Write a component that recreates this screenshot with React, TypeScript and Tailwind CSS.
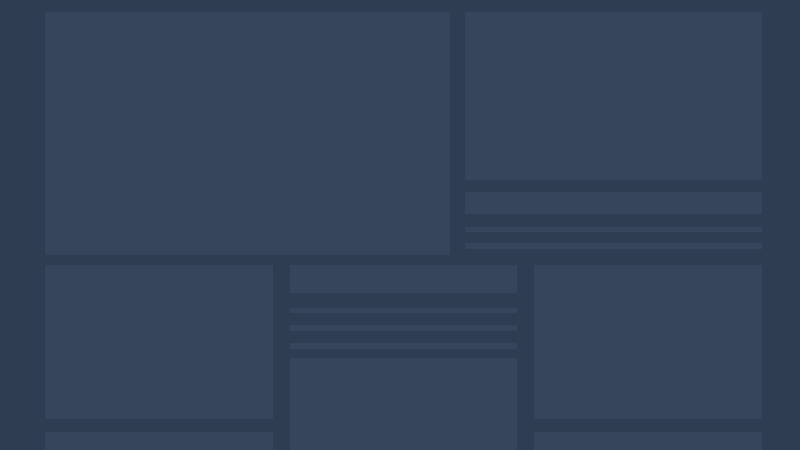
function Block({ className = '' }: { className?: string }) {
  return <div className={`bg-[#36455c] ${className}`} />
}

export default function App() {
  return (
    <div className="h-[450px] w-[800px] overflow-hidden bg-[#2f3d52]">
      <div className="flex flex-col gap-[10px] pl-[45px] pr-[38px] pt-[12px] blur-[0.6px]">
        {/* top row */}
        <div className="flex h-[243px] gap-[15px]">
          <Block className="w-[405px] shrink-0" />
          <div className="flex flex-1 flex-col">
            <Block className="h-[168px]" />
            <Block className="mt-[12px] h-[22px]" />
            <Block className="mt-[13px] h-[5px]" />
            <Block className="mt-[11px] h-[6px]" />
          </div>
        </div>

        {/* bottom row */}
        <div className="grid grid-cols-3 gap-[17px]">
          <div className="flex flex-col gap-[13px]">
            <Block className="h-[154px]" />
            <Block className="h-[60px]" />
          </div>
          <div className="flex flex-col">
            <Block className="h-[28px]" />
            <Block className="mt-[15px] h-[5px]" />
            <Block className="mt-[12px] h-[6px]" />
            <Block className="mt-[12px] h-[6px]" />
            <Block className="mt-[9px] h-[120px]" />
          </div>
          <div className="flex flex-col gap-[13px]">
            <Block className="h-[154px]" />
            <Block className="h-[60px]" />
          </div>
        </div>
      </div>
    </div>
  )
}
